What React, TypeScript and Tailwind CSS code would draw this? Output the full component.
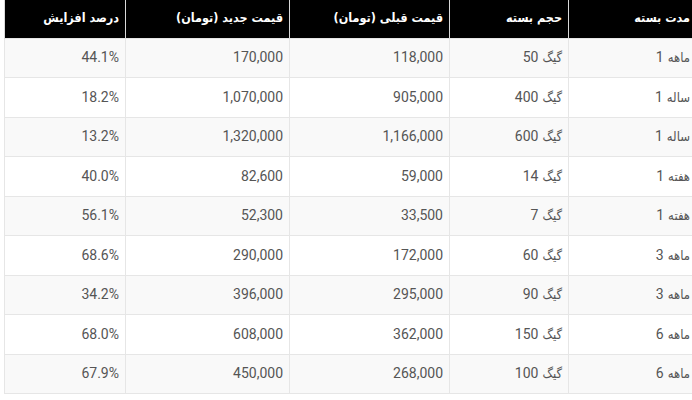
const headers = ["مدت بسته", "حجم بسته", "قیمت قبلی (تومان)", "قیمت جدید (تومان)", "درصد افزایش"];

type Cell = string | [string, string];

const rows: Cell[][] = [
  [["1", "ماهه"], ["50", "گیگ"], "118,000", "170,000", "44.1%"],
  [["1", "ساله"], ["400", "گیگ"], "905,000", "1,070,000", "18.2%"],
  [["1", "ساله"], ["600", "گیگ"], "1,166,000", "1,320,000", "13.2%"],
  [["1", "هفته"], ["14", "گیگ"], "59,000", "82,600", "40.0%"],
  [["1", "هفته"], ["7", "گیگ"], "33,500", "52,300", "56.1%"],
  [["3", "ماهه"], ["60", "گیگ"], "172,000", "290,000", "68.6%"],
  [["3", "ماهه"], ["90", "گیگ"], "295,000", "396,000", "34.2%"],
  [["6", "ماهه"], ["150", "گیگ"], "362,000", "608,000", "68.0%"],
  [["6", "ماهه"], ["100", "گیگ"], "268,000", "450,000", "67.9%"],
];

const widths = ["w-[128px]", "w-[119px]", "w-[160px]", "w-[164px]", "w-[121px]"];

export default function App() {
  return (
    <div className="w-[692px] h-[400px] overflow-hidden bg-white pl-[4px] font-['Roboto','DejaVu_Sans',sans-serif]">
      <table dir="rtl" className="w-[692px] table-fixed border-collapse">
        <colgroup>
          {widths.map((w, i) => (
            <col key={i} className={w} />
          ))}
        </colgroup>
        <thead>
          <tr className="h-[38px] bg-black">
            {headers.map((h, i) => (
              <th
                key={i}
                className="border-x border-[#d9d9d9] px-[6px] text-right font-['DejaVu_Sans_Condensed','DejaVu_Sans',sans-serif] text-[12.5px] font-bold text-white whitespace-nowrap"
              >
                {h}
              </th>
            ))}
          </tr>
        </thead>
        <tbody>
          {rows.map((r, ri) => (
            <tr key={ri} className={`h-[39.5px] ${ri % 2 === 0 ? "bg-[#f9f9f9]" : "bg-white"}`}>
              {r.map((c, ci) => (
                <td
                  key={ci}
                  className="border border-[#e6e6e6] px-[6px] text-right text-[14px] text-[#555] whitespace-nowrap"
                >
                  {typeof c === "string" ? (
                    c
                  ) : (
                    <div dir="ltr" className="flex justify-end items-baseline gap-[4px]">
                      <span>{c[0]}</span>
                      <span className="font-['DejaVu_Sans_Condensed','DejaVu_Sans',sans-serif] text-[13px]">{c[1]}</span>
                    </div>
                  )}
                </td>
              ))}
            </tr>
          ))}
        </tbody>
      </table>
    </div>
  );
}
